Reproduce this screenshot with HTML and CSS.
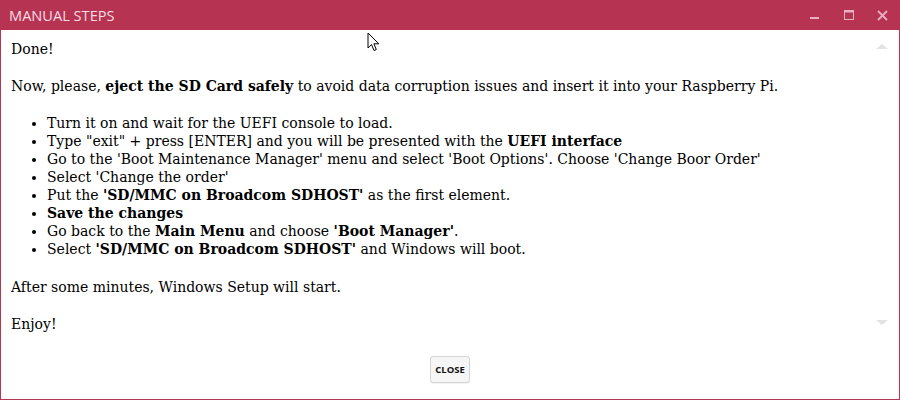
FILE: index.html
```html
<!DOCTYPE html>
<html>
<head>
<meta charset="utf-8">
<link rel="stylesheet" href="styles.css">
</head>
<body>
<div class="window">
  <div class="titlebar">
    <span class="title">MANUAL STEPS</span>
    <div class="controls">
      <span class="ctl"><svg width="10" height="10" viewBox="0 0 10 10"><rect x="0" y="7" width="9" height="2" fill="#eab0bf"/></svg></span>
      <span class="ctl"><svg width="10" height="10" viewBox="0 0 10 10"><rect x="0.5" y="0.5" width="9" height="9" fill="none" stroke="#eab0bf"/><rect x="0" y="0" width="10" height="2.5" fill="#eab0bf"/></svg></span>
      <span class="ctl"><svg width="11" height="11" viewBox="0 0 11 11"><path d="M1 1 L10 10 M10 1 L1 10" stroke="#eab0bf" stroke-width="1.8"/></svg></span>
    </div>
  </div>
  <div class="content">
    <div class="scroll-up"></div>
    <div class="scroll-down"></div>
    <p class="first">Done!</p>
    <p>Now, please, <b>eject the SD Card safely</b> to avoid data corruption issues and insert it into your Raspberry Pi.</p>
    <ul>
      <li>Turn it on and wait for the UEFI console to load.</li>
      <li>Type "exit" + press [ENTER] and you will be presented with the <b>UEFI interface</b></li>
      <li>Go to the 'Boot Maintenance Manager' menu and select 'Boot Options'. Choose 'Change Boor Order'</li>
      <li>Select 'Change the order'</li>
      <li>Put the <b>'SD/MMC on Broadcom SDHOST'</b> as the first element.</li>
      <li><b>Save the changes</b></li>
      <li>Go back to the <b>Main Menu</b> and choose <b>'Boot Manager'</b>.</li>
      <li>Select <b>'SD/MMC on Broadcom SDHOST'</b> and Windows will boot.</li>
    </ul>
    <p>After some minutes, Windows Setup will start.</p>
    <p>Enjoy!</p>
  </div>
  <div class="footer">
    <button class="close-btn">CLOSE</button>
  </div>
  <svg class="cursor" width="14" height="21" viewBox="0 0 14 21"><path d="M1 1 L1 16 L4.5 12.5 L7 18.5 L9.3 17.5 L6.9 11.8 L11.8 11.8 Z" fill="#fff" stroke="#000" stroke-width="1" stroke-linejoin="miter"/></svg>
</div>
</body>
</html>
```
FILE: styles.css
```css
html, body {
  margin: 0;
  padding: 0;
  background: #fff;
}
.window {
  position: relative;
  width: 900px;
  height: 400px;
  box-sizing: border-box;
  border: 1px solid #b73352;
  border-top: 0;
  display: flex;
  flex-direction: column;
  overflow: hidden;
}
.titlebar {
  height: 30px;
  flex: none;
  background: #b73352;
  margin: 0 -1px;
  display: flex;
  align-items: center;
  justify-content: space-between;
  padding-left: 9px;
}
.title {
  font-family: "Open Sans", "Noto Sans", sans-serif;
  font-size: 14.6px;
  color: #f6dce3;
  letter-spacing: 0;
}
.controls {
  display: flex;
  align-items: center;
  padding-right: 12px;
  gap: 23px;
}
.ctl {
  display: flex;
  width: 11px;
  height: 11px;
  align-items: center;
  justify-content: center;
}
.content {
  position: relative;
  flex: 1;
  overflow: hidden;
  padding: 10px 10px 0 10px;
  font-family: "DejaVu Serif", serif;
  font-size: 14px;
  line-height: 18px;
  color: #000;
}
.content p {
  margin: 19px 0;
}
.content p.first {
  margin-top: 0;
}
.content ul {
  margin: 18px 0 20px;
  padding-left: 36px;
}
.content b {
  font-weight: bold;
}
.scroll-up, .scroll-down {
  position: absolute;
  right: 11px;
  width: 0;
  height: 0;
  border-left: 6px solid transparent;
  border-right: 6px solid transparent;
}
.scroll-up {
  top: 14px;
  border-bottom: 5px solid #e3e3e6;
}
.scroll-down {
  top: 290px;
  border-top: 5px solid #e3e3e6;
}
.footer {
  height: 60px;
  flex: none;
  display: flex;
  align-items: center;
  justify-content: center;
}
.close-btn {
  font-family: "Open Sans", "Noto Sans", sans-serif;
  font-weight: bold;
  font-size: 9.5px;
  color: #111;
  background: #f6f6f6;
  border: 1px solid #d4d4d4;
  border-radius: 3px;
  width: 40px;
  height: 27px;
  padding: 0;
  margin-top: 1px;
  box-shadow: 0 1px 1px rgba(0,0,0,0.05);
}
.cursor {
  position: absolute;
  left: 366px;
  top: 32px;
}
```
